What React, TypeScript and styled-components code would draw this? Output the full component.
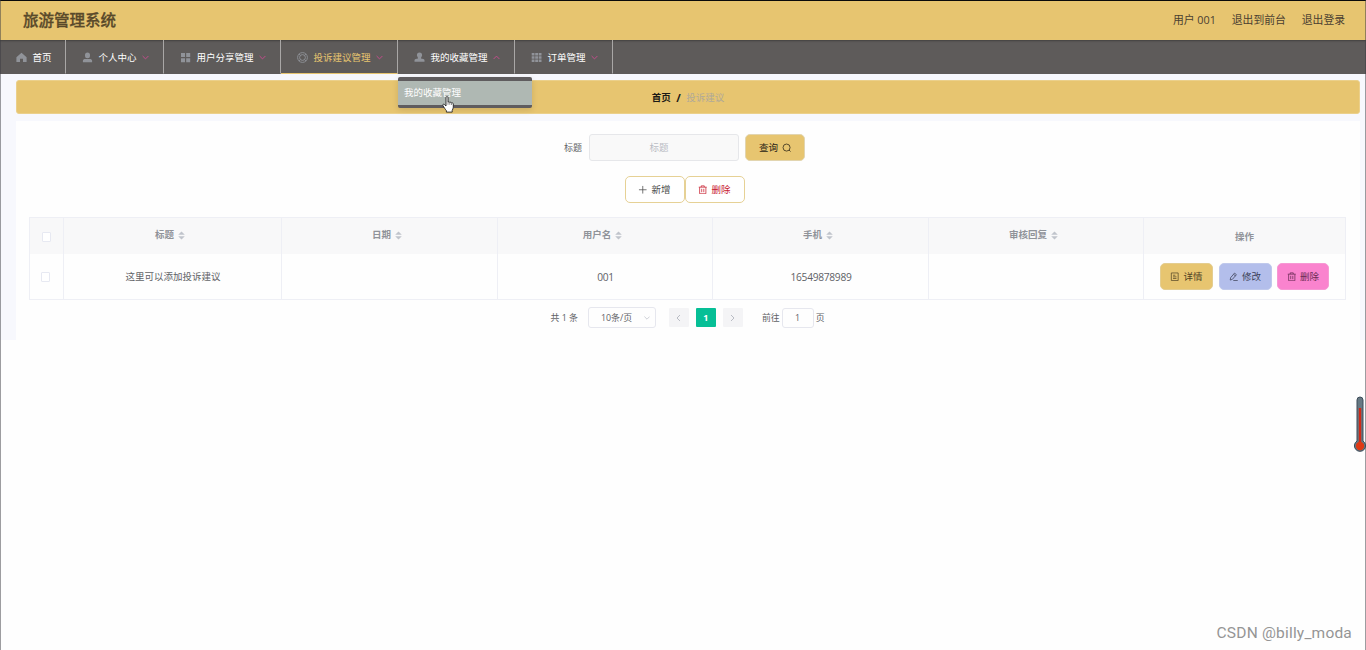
import React from "react";
import styled, { createGlobalStyle } from "styled-components";

const GOLD = "#e7c570";

const GlobalStyle = createGlobalStyle`
  * { box-sizing: border-box; }
  body {
    margin: 0;
    background: #fefefe;
    font-family: "Open Sans", "Noto Sans CJK SC", sans-serif;
    font-size: 9.5px;
    line-height: 14px;
    color: #606266;
  }
`;

const Page = styled.div`
  position: relative;
  height: 650px;
  overflow: hidden;
  &::after {
    content: "";
    position: absolute;
    inset: 0;
    border: solid rgba(60, 60, 65, 0.5);
    border-width: 0 1px;
    pointer-events: none;
  }
`;

const Header = styled.header`
  height: 40px;
  border-top: 1px solid #0a0a0a;
  background: ${GOLD};
  display: flex;
  align-items: center;
  justify-content: space-between;
  padding: 0 21px 1px 23px;
`;

const Title = styled.h1`
  margin: 0;
  font-size: 15.5px;
  line-height: 20px;
  font-weight: 500;
  color: #59492a;
  -webkit-text-stroke: 0.3px #59492a;
`;

const UserLinks = styled.div`
  display: flex;
  gap: 16px;
  font-size: 10.8px;
  line-height: 16px;
  color: #4a4030;
`;

const Nav = styled.nav`
  height: 34px;
  background: #5e5b5a;
  box-shadow: inset 0 2px 2px -1px rgba(0, 0, 0, 0.3);
  display: flex;
`;

const NavItem = styled.div<{ $width: number; $active?: boolean }>`
  position: relative;
  width: ${(p) => p.$width}px;
  border-right: 1px solid #a9a7a6;
  border-bottom: 1px solid ${(p) => (p.$active ? GOLD : "transparent")};
  padding: 2px 0 0 16px;
  display: flex;
  align-items: center;
  color: ${(p) => (p.$active ? GOLD : "#ffffff")};
`;

const NavIcon = styled.svg`
  width: 11px;
  height: 11px;
  margin-right: 5.5px;
  color: #909399;
  flex: none;
`;

const NavLabel = styled.span`
  white-space: nowrap;
`;

const NavArrow = styled.svg<{ $up?: boolean }>`
  width: 7px;
  height: 5px;
  margin-left: 5.5px;
  flex: none;
  transform: ${(p) => (p.$up ? "rotate(180deg)" : "none")};
`;

const Dropdown = styled.div`
  position: absolute;
  z-index: 2;
  top: 37px;
  left: 0;
  width: 134px;
  height: 31px;
  padding: 4px 0 3px;
  background: #5f5c5e;
  border-radius: 2px;
  box-shadow: 0 2px 6px rgba(0, 0, 0, 0.12);
`;

const DropdownItem = styled.div`
  height: 24px;
  padding-left: 6px;
  line-height: 23px;
  background: #afb8b3;
  color: #fff;
`;

const Pointer = styled.svg`
  position: absolute;
  z-index: 3;
  left: 442px;
  top: 96px;
  width: 12px;
  height: 17px;
`;

const Body = styled.main`
  height: 266px;
  background: #f7f8fd;
  padding: 6px 6px 0 16px;
`;

const Breadcrumb = styled.div`
  height: 34px;
  background: ${GOLD};
  border: 1px solid #ebd08b;
  border-radius: 3px;
  padding-top: 1px;
  display: flex;
  align-items: center;
  justify-content: center;
  gap: 6px;
  font-weight: 700;
  color: #1c1a16;
`;

const Slash = styled.span`
  font-size: 11px;
  margin: 0 -0.5px;
`;

const Crumb = styled.span`
  font-weight: 400;
  color: #b0a999;
`;

const Card = styled.section`
  margin-top: 7px;
  height: 219px;
  background: #fefefe;
  padding: 13px 14px 0 13px;
`;

const FormRow = styled.div`
  display: flex;
  align-items: center;
  justify-content: center;
  height: 27px;
  padding-right: 6px;
`;

const FieldLabel = styled.label`
  font-size: 9px;
  margin-right: 7px;
`;

const Input = styled.input`
  width: 150px;
  height: 27px;
  margin-right: 6px;
  padding: 0 10px 0 0;
  border: 1px solid #e6e7ea;
  border-radius: 3px;
  background: #f9f9f9;
  text-align: center;
  font: inherit;
  outline: none;
  &::placeholder {
    color: #b9bcc4;
    opacity: 1;
  }
`;

const Button = styled.button<{ $bg: string; $ink: string; $line: string; $width: number }>`
  width: ${(p) => p.$width}px;
  height: 27px;
  padding: 0;
  display: flex;
  align-items: center;
  justify-content: center;
  gap: 3.5px;
  font: inherit;
  color: ${(p) => p.$ink};
  background: ${(p) => p.$bg};
  border: 1px solid ${(p) => p.$line};
  border-radius: 5px;
  svg {
    width: 9.5px;
    height: 9.5px;
    flex: none;
  }
`;

const Toolbar = styled(FormRow)`
  margin: 15px 0 14px;
`;

const Table = styled.div`
  border: solid #eeeff5;
  border-width: 1px 0 0 1px;
`;

const Row = styled.div<{ $height: number; $head?: boolean }>`
  display: grid;
  grid-template-columns: 34px 218px 216px 215px 216px 215px 202px;
  height: ${(p) => p.$height}px;
  background: ${(p) => (p.$head ? "#f8f8f9" : "transparent")};
  font-weight: ${(p) => (p.$head ? 700 : 400)};
  color: ${(p) => (p.$head ? "#909399" : "#606266")};
  border-bottom: ${(p) => (p.$head ? "none" : "1px solid #eeeff5")};
`;

const Cell = styled.div`
  display: flex;
  align-items: center;
  justify-content: center;
  border-right: 1px solid #eeeff5;
`;

const HeadCell = styled(Cell)`
  padding-top: 1px;
`;

const CheckCell = styled(Cell)`
  padding: 1px 2px 0 0;
`;

const SortCell = styled(Cell)`
  padding: 0 5px 2px 0;
`;

const DataCell = styled(Cell)`
  padding-left: 1px;
`;

const NumberText = styled.span`
  font-size: 10.2px;
  letter-spacing: -0.28px;
`;

const ActionCell = styled(Cell)`
  gap: 5.5px;
`;

const CheckBox = styled.span`
  width: 9px;
  height: 10px;
  border: 1px solid #e7e9f2;
  border-radius: 1px;
  background: #fff;
`;

const SortIcon = styled.svg`
  width: 7px;
  height: 9px;
  margin-left: 4px;
`;

const Pagination = styled.div`
  display: flex;
  align-items: center;
  justify-content: center;
  height: 21px;
  margin-top: 7px;
  font-size: 8.9px;
`;

const Total = styled.span`
  margin-right: 10px;
`;

const PageSize = styled.div`
  width: 68px;
  height: 21px;
  border: 1px solid #e6e7ee;
  border-radius: 3px;
  margin-right: 13px;
  padding: 0 5px 0 12px;
  display: flex;
  align-items: center;
  justify-content: space-between;
`;

const PageButton = styled.div<{ $active?: boolean }>`
  width: 20px;
  height: 19px;
  margin-right: 7px;
  border-radius: 1px;
  display: flex;
  align-items: center;
  justify-content: center;
  font-weight: 700;
  color: ${(p) => (p.$active ? "#fff" : "#b9bcc4")};
  background: ${(p) => (p.$active ? "#06bf96" : "#f4f4f6")};
`;

const Jump = styled.div`
  display: flex;
  align-items: center;
  margin-left: 12px;
  gap: 2px;
`;

const JumpBox = styled.div`
  width: 32px;
  height: 20px;
  border: 1px solid #e6e7ee;
  border-radius: 3px;
  text-align: center;
  line-height: 18px;
`;

const Thermometer = styled.svg`
  position: absolute;
  z-index: 1;
  left: 1353px;
  top: 396px;
  width: 13px;
  height: 57px;
`;

const Watermark = styled.div`
  position: absolute;
  right: 14px;
  bottom: 8px;
  font-family: Roboto, sans-serif;
  font-size: 15.5px;
  letter-spacing: 0.2px;
  line-height: 18px;
  color: #959595;
`;

const icons = {
  home: <path d="M5.5 .8 10.6 5.3V10H7V6.8H4V10H.4V5.3Z" fill="currentColor" />,
  user: (
    <path
      d="M5.5.5A2.5 2.5 0 0 1 8 3v.7a2.5 2.5 0 0 1-5 0V3A2.5 2.5 0 0 1 5.5.5ZM.9 10.3V8.7C.9 7.5 2 6.9 3.2 6.9h4.6c1.2 0 2.3.6 2.3 1.8v1.6Z"
      fill="currentColor"
    />
  ),
  grid: <path d="M1 1h4v4H1zM6.2 1h4v4h-4zM1 6.2h4v4H1zM6.2 6.2h4v4h-4z" fill="currentColor" />,
  ring: (
    <g fill="none" stroke="currentColor">
      <circle cx="5.5" cy="5.5" r="4.9" strokeWidth=".9" />
      <circle cx="5.5" cy="5.5" r="2.9" strokeWidth=".9" />
      <path d="M1.9 1.9 3.5 3.5M9.1 1.9 7.5 3.5M1.9 9.1 3.5 7.5M9.1 9.1 7.5 7.5" strokeWidth=".8" />
    </g>
  ),
  stamp: (
    <path
      d="M5.5.6a2.6 2.6 0 0 1 2.6 2.6c0 1.2-1.1 1.9-1.1 3.2l2.4.5c.7.2 1.1.6 1.1 1.3v1.6H.5V8.2c0-.7.4-1.1 1.1-1.3L4 6.4C4 5.1 2.9 4.4 2.9 3.2A2.6 2.6 0 0 1 5.5.6Z"
      fill="currentColor"
    />
  ),
  menu: (
    <path
      d="M.7 1h2.8v2.5H.7zM4.2 1H7v2.5H4.2zM7.7 1h2.8v2.5H7.7zM.7 4.2h2.8v2.5H.7zM4.2 4.2H7v2.5H4.2zM7.7 4.2h2.8v2.5H7.7zM.7 7.4h2.8v2.5H.7zM4.2 7.4H7v2.5H4.2zM7.7 7.4h2.8v2.5H7.7z"
      fill="currentColor"
    />
  ),
};

type NavEntry = {
  icon: keyof typeof icons;
  label: string;
  width: number;
  arrow?: boolean;
  active?: boolean;
  open?: boolean;
};

const navItems: NavEntry[] = [
  { icon: "home", label: "首页", width: 66 },
  { icon: "user", label: "个人中心", width: 98, arrow: true },
  { icon: "grid", label: "用户分享管理", width: 117, arrow: true },
  { icon: "ring", label: "投诉建议管理", width: 117, arrow: true, active: true },
  { icon: "stamp", label: "我的收藏管理", width: 117, arrow: true, open: true },
  { icon: "menu", label: "订单管理", width: 98, arrow: true },
];

const Trash = () => (
  <svg viewBox="0 0 10 10" fill="none" stroke="currentColor" strokeWidth=".8">
    <path d="M.8 2.3h8.4M3.4 2.2V.9h3.2v1.3M1.7 2.4v6.8h6.6V2.4M3.9 4v3.6M6.1 4v3.6" />
  </svg>
);

const Plus = () => (
  <svg viewBox="0 0 10 10" fill="none" stroke="currentColor" strokeWidth=".8">
    <path d="M5 1v8M1 5h8" />
  </svg>
);

const Search = () => (
  <svg viewBox="0 0 10 10" fill="none" stroke="currentColor" strokeWidth=".8">
    <circle cx="4.8" cy="4.8" r="3.7" />
    <path d="M7.4 7.4 9 9" />
  </svg>
);

const Document = () => (
  <svg viewBox="0 0 10 10" fill="none" stroke="currentColor" strokeWidth=".75">
    <path d="M1.4 1h7.2v8H1.4zM3.2 3.4h2.4M3.2 5.1h3.6M3.2 6.8h3.6" />
  </svg>
);

const Edit = () => (
  <svg viewBox="0 0 10 10" fill="none" stroke="currentColor" strokeWidth=".8">
    <path d="M1.7 6 5.8 1.2l2 1.6-4.2 4.9-2.3.8ZM4.9 2.5l1.9 1.6M4.5 9h4.7" />
  </svg>
);

const columns = ["标题", "日期", "用户名", "手机", "审核回复"];
const record = ["这里可以添加投诉建议", "", "001", "16549878989", ""];

export default function App() {
  return (
    <Page>
      <GlobalStyle />
      <Header>
        <Title>旅游管理系统</Title>
        <UserLinks>
          <span>用户 001</span>
          <span>退出到前台</span>
          <span>退出登录</span>
        </UserLinks>
      </Header>
      <Nav>
        {navItems.map((item) => (
          <NavItem key={item.label} $width={item.width} $active={item.active}>
            <NavIcon viewBox="0 0 11 11">{icons[item.icon]}</NavIcon>
            <NavLabel>{item.label}</NavLabel>
            {item.arrow && (
              <NavArrow viewBox="0 0 7 5" $up={item.open}>
                <path d="M.6 1 3.5 3.9 6.4 1" fill="none" stroke="#c34d8c" />
              </NavArrow>
            )}
            {item.open && (
              <Dropdown>
                <DropdownItem>我的收藏管理</DropdownItem>
              </Dropdown>
            )}
          </NavItem>
        ))}
      </Nav>
      <Body>
        <Breadcrumb>
          <span>首页</span>
          <Slash>/</Slash>
          <Crumb>投诉建议</Crumb>
        </Breadcrumb>
        <Card>
          <FormRow>
            <FieldLabel>标题</FieldLabel>
            <Input placeholder="标题" />
            <Button $bg={GOLD} $ink="#2a2415" $line="#e2d5b0" $width={60}>
              <span>查询</span>
              <Search />
            </Button>
          </FormRow>
          <Toolbar>
            <Button $bg="#fff" $ink="#4c4c4c" $line="#e6d195" $width={60}>
              <Plus />
              <span>新增</span>
            </Button>
            <Button $bg="#fff" $ink="#c8202f" $line="#e6d195" $width={60}>
              <Trash />
              <span>删除</span>
            </Button>
          </Toolbar>
          <Table>
            <Row $height={36} $head>
              <HeadCell>
                <CheckBox />
              </HeadCell>
              {columns.map((name) => (
                <SortCell key={name}>
                  <span>{name}</span>
                  <SortIcon viewBox="0 0 7 9">
                    <path d="M3.5.4 6.8 3.8H.2ZM.2 5.2h6.6L3.5 8.6Z" fill="#c0c4cc" />
                  </SortIcon>
                </SortCell>
              ))}
              <HeadCell>操作</HeadCell>
            </Row>
            <Row $height={46}>
              <CheckCell>
                <CheckBox />
              </CheckCell>
              {record.map((value, i) => (
                <DataCell key={columns[i]}>
                  {/^\d+$/.test(value) ? <NumberText>{value}</NumberText> : value}
                </DataCell>
              ))}
              <ActionCell>
                <Button $bg={GOLD} $ink="#4f4225" $line="#e4cd90" $width={53}>
                  <Document />
                  <span>详情</span>
                </Button>
                <Button $bg="#b3beeb" $ink="#3d4157" $line="#c0c9ec" $width={53}>
                  <Edit />
                  <span>修改</span>
                </Button>
                <Button $bg="#fa83ce" $ink="#6a2c54" $line="#f798d4" $width={52}>
                  <Trash />
                  <span>删除</span>
                </Button>
              </ActionCell>
            </Row>
          </Table>
          <Pagination>
            <Total>共 1 条</Total>
            <PageSize>
              <span>10条/页</span>
              <svg width="6" height="4" viewBox="0 0 6 4">
                <path d="M.4.6 3 3.2 5.6.6" fill="none" stroke="#c0c4cc" strokeWidth=".8" />
              </svg>
            </PageSize>
            <PageButton>
              <svg width="5" height="8" viewBox="0 0 5 8">
                <path d="M4 1 1 4l3 3" fill="none" stroke="currentColor" />
              </svg>
            </PageButton>
            <PageButton $active>1</PageButton>
            <PageButton>
              <svg width="5" height="8" viewBox="0 0 5 8">
                <path d="m1 1 3 3-3 3" fill="none" stroke="currentColor" />
              </svg>
            </PageButton>
            <Jump>
              <span>前往</span>
              <JumpBox>1</JumpBox>
              <span>页</span>
            </Jump>
          </Pagination>
        </Card>
      </Body>
      <Pointer viewBox="0 0 12 17">
        <path
          d="M4 1.6c0-1.4 2-1.4 2 0v4.6c.5-.6 1.6-.5 1.8.3.6-.5 1.5-.2 1.7.5.7-.4 1.8 0 1.8 1v3.2c0 1.4-.8 2.2-1.1 3.2v1.7H4.4v-1.4C3.5 13.5 2 11.6.9 9.6c-.5-1 .6-1.9 1.5-1.1L4 10Z"
          fill="#fff"
          stroke="#222"
          strokeWidth=".9"
        />
        <path d="M6 6.3v2.5M7.8 6.8v2M9.5 7.3V9" stroke="#222" strokeWidth=".5" />
      </Pointer>
      <Thermometer viewBox="0 0 13 57">
        <path
          d="M4 45V4a3 3 0 0 1 6 0v41a5.6 5.6 0 1 1-6 0Z"
          fill="#667883"
          stroke="#3c4b58"
        />
        <path d="M7 12v37" stroke="#cf2a18" strokeWidth="2.4" />
        <circle cx="7" cy="50" r="4.2" fill="#df3915" />
      </Thermometer>
      <Watermark>CSDN @billy_moda</Watermark>
    </Page>
  );
}
